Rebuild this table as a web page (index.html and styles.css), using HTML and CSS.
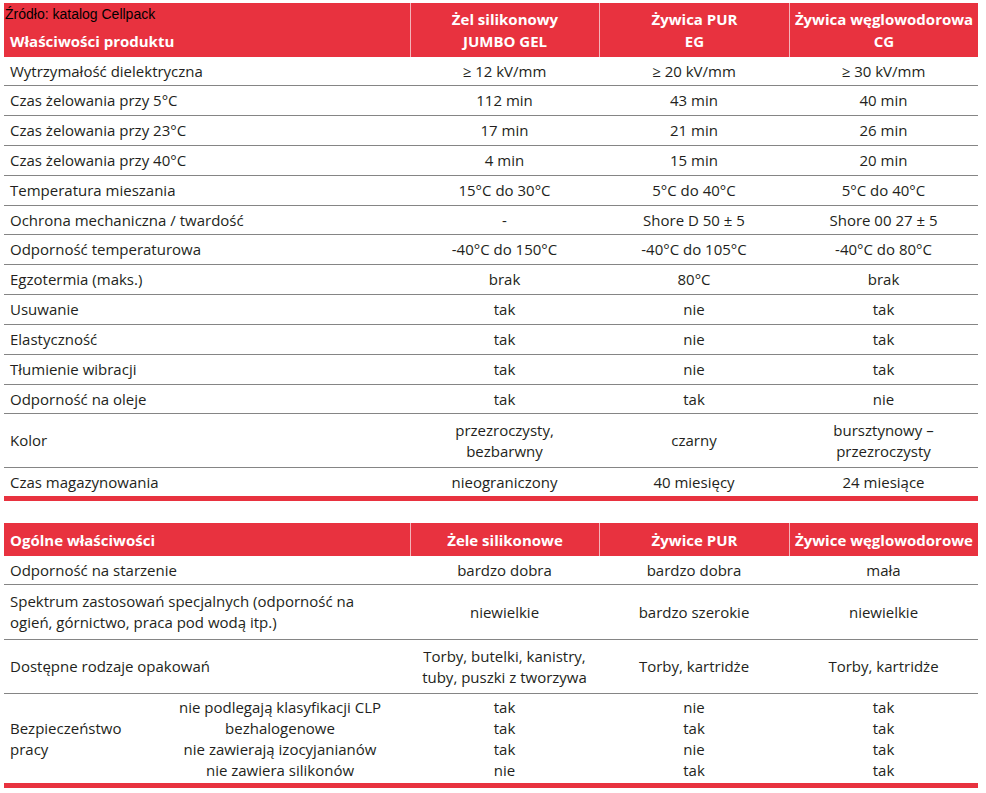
FILE: index.html
```html
<!DOCTYPE html>
<html lang="pl">
<head>
<meta charset="utf-8">
<title>Porównanie właściwości</title>
<link rel="stylesheet" href="styles.css">
</head>
<body>
<div class="sheet">
  <div class="source">Źródło: katalog Cellpack</div>

  <div class="tbl">
    <div class="row head">
      <div class="c first bottom">Właściwości produktu</div>
      <div class="c">Żel silikonowy<br>JUMBO GEL</div>
      <div class="c">Żywica PUR<br>EG</div>
      <div class="c">Żywica węglowodorowa<br>CG</div>
    </div>
    <div class="row r29"><div class="c first">Wytrzymałość dielektryczna</div><div class="c">≥ 12 kV/mm</div><div class="c">≥ 20 kV/mm</div><div class="c">≥ 30 kV/mm</div></div>
    <div class="row"><div class="c first">Czas żelowania przy 5°C</div><div class="c">112 min</div><div class="c">43 min</div><div class="c">40 min</div></div>
    <div class="row"><div class="c first">Czas żelowania przy 23°C</div><div class="c">17 min</div><div class="c">21 min</div><div class="c">26 min</div></div>
    <div class="row"><div class="c first">Czas żelowania przy 40°C</div><div class="c">4 min</div><div class="c">15 min</div><div class="c">20 min</div></div>
    <div class="row"><div class="c first">Temperatura mieszania</div><div class="c">15°C do 30°C</div><div class="c">5°C do 40°C</div><div class="c">5°C do 40°C</div></div>
    <div class="row r29"><div class="c first">Ochrona mechaniczna / twardość</div><div class="c">-</div><div class="c">Shore D 50 ± 5</div><div class="c">Shore 00 27 ± 5</div></div>
    <div class="row"><div class="c first">Odporność temperaturowa</div><div class="c">-40°C do 150°C</div><div class="c">-40°C do 105°C</div><div class="c">-40°C do 80°C</div></div>
    <div class="row"><div class="c first">Egzotermia (maks.)</div><div class="c">brak</div><div class="c">80°C</div><div class="c">brak</div></div>
    <div class="row"><div class="c first">Usuwanie</div><div class="c">tak</div><div class="c">nie</div><div class="c">tak</div></div>
    <div class="row"><div class="c first">Elastyczność</div><div class="c">tak</div><div class="c">nie</div><div class="c">tak</div></div>
    <div class="row"><div class="c first">Tłumienie wibracji</div><div class="c">tak</div><div class="c">nie</div><div class="c">tak</div></div>
    <div class="row r29"><div class="c first">Odporność na oleje</div><div class="c">tak</div><div class="c">tak</div><div class="c">nie</div></div>
    <div class="row r54"><div class="c first">Kolor</div><div class="c">przezroczysty,<br>bezbarwny</div><div class="c">czarny</div><div class="c">bursztynowy –<br>przezroczysty</div></div>
    <div class="row last r33"><div class="c first">Czas magazynowania</div><div class="c">nieograniczony</div><div class="c">40 miesięcy</div><div class="c">24 miesiące</div></div>
  </div>

  <div class="tbl second">
    <div class="row head h33">
      <div class="c first">Ogólne właściwości</div>
      <div class="c">Żele silikonowe</div>
      <div class="c">Żywice PUR</div>
      <div class="c">Żywice węglowodorowe</div>
    </div>
    <div class="row r29"><div class="c first">Odporność na starzenie</div><div class="c">bardzo dobra</div><div class="c">bardzo dobra</div><div class="c">mała</div></div>
    <div class="row r55"><div class="c first">Spektrum zastosowań specjalnych (odporność na<br>ogień, górnictwo, praca pod wodą itp.)</div><div class="c">niewielkie</div><div class="c">bardzo szerokie</div><div class="c">niewielkie</div></div>
    <div class="row r54"><div class="c first">Dostępne rodzaje opakowań</div><div class="c">Torby, butelki, kanistry,<br>tuby, puszki z tworzywa</div><div class="c">Torby, kartridże</div><div class="c">Torby, kartridże</div></div>
    <div class="row last r94">
      <div class="c first split">
        <div class="safety">Bezpieczeństwo<br>pracy</div>
        <div class="subs">nie podlegają klasyfikacji CLP<br>bezhalogenowe<br>nie zawierają izocyjanianów<br>nie zawiera silikonów</div>
      </div>
      <div class="c">tak<br>tak<br>tak<br>nie</div>
      <div class="c">nie<br>tak<br>nie<br>tak</div>
      <div class="c">tak<br>tak<br>tak<br>tak</div>
    </div>
  </div>
</div>
</body>
</html>
```

FILE: styles.css
```css
* { box-sizing: border-box; }

html, body {
  margin: 0;
  padding: 0;
  background: #ffffff;
}

body {
  font-family: "Open Sans", "Noto Sans", sans-serif;
  font-size: 15px;
  color: #231f20;
}

.sheet {
  position: relative;
  width: 974px;
  margin: 3px 0 0 4px;
}

.source {
  position: absolute;
  left: 1px;
  top: 3px;
  font-family: "Liberation Sans", Arial, sans-serif;
  font-size: 14px;
  line-height: 16px;
  color: #000;
  z-index: 2;
}

.tbl.second {
  margin-top: 22px;
}

.row {
  display: grid;
  grid-template-columns: 406px 189px 190px 189px;
  height: 30px;
  border-bottom: 1px solid #858585;
  line-height: 21px;
}

.row.r29 { height: 29px; }
.row.r33 { height: 33px; }
.row.r54 { height: 54px; }
.row.r55 { height: 55px; }
.row.r94 { height: 94px; }

.row.last {
  border-bottom: 5px solid #e8323f;
}

.c {
  display: flex;
  align-items: center;
  justify-content: center;
  text-align: center;
  white-space: nowrap;
}

.c.first {
  justify-content: flex-start;
  text-align: left;
  padding-left: 6px;
}

.head {
  height: 54px;
  border-bottom: none;
  background: #e8323f;
  color: #ffffff;
  font-weight: 700;
  line-height: 22px;
}

.head.h33 { height: 33px; }

.head .c + .c {
  border-left: 1px solid #f4b3b8;
}

.head .c.bottom {
  align-items: flex-end;
  padding-bottom: 5px;
}

.split {
  display: grid;
  grid-template-columns: 140px 1fr;
  align-items: center;
  padding-left: 6px;
}

.safety {
  text-align: left;
}

.subs {
  text-align: center;
}
```
